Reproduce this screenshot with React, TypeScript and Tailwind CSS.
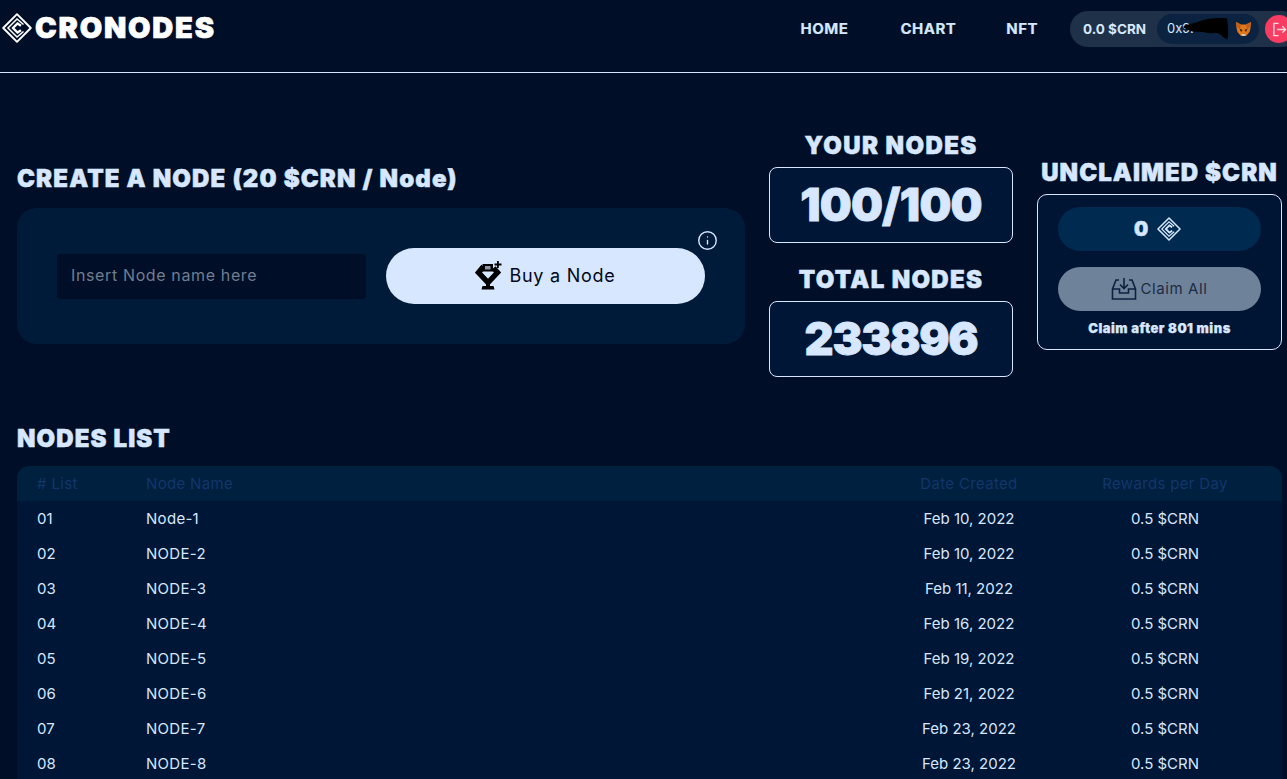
import React from "react";
import { Info } from "lucide-react";

const Logo = ({ size, color = "#fff" }: { size: number; color?: string }) => (
  <svg width={size} height={size} viewBox="0 0 30 30" fill="none" className="shrink-0">
    <path d="M15 1.200 28.800 15 15 28.800 1.200 15Z" stroke={color} strokeWidth="1.900" strokeLinejoin="round" />
    <path d="M21.500 11.500 15 6 6 15 15 24 21.500 18.500" stroke={color} strokeWidth="1.500" />
    <path d="M19 12.800 15.500 10.500 11 15 15.500 19.500 19 17.200" stroke={color} strokeWidth="2.300" />
  </svg>
);

const rows = [
  ["01", "Node-1", "Feb 10, 2022"],
  ["02", "NODE-2", "Feb 10, 2022"],
  ["03", "NODE-3", "Feb 11, 2022"],
  ["04", "NODE-4", "Feb 16, 2022"],
  ["05", "NODE-5", "Feb 19, 2022"],
  ["06", "NODE-6", "Feb 21, 2022"],
  ["07", "NODE-7", "Feb 23, 2022"],
  ["08", "NODE-8", "Feb 23, 2022"],
];

export default function App() {
  return (
    <div className="h-[779px] w-[1287px] overflow-hidden bg-[#000f27] font-['Inter','Liberation_Sans',sans-serif] text-[#d6e7ff]">
      <header className="flex h-[73px] items-start justify-between border-b border-[#d6e7ff] pl-[2px]">
        <div className="flex h-[55px] items-center gap-[3px]">
          <Logo size={30} />
          <span className="text-[29px] leading-none font-black tracking-[1.8px] text-white [-webkit-text-stroke:0.7px_white]">CRONODES</span>
        </div>
        <div className="flex h-[58px] items-center">
          <nav className="flex items-center text-[15px] font-bold tracking-[0.5px] [-webkit-text-stroke:0.2px_#d6e7ff]">
            <a className="mr-[52px]">HOME</a>
            <a className="mr-[50px]">CHART</a>
            <a className="mr-[32px]">NFT</a>
          </nav>
          <div className="mr-[-13px] flex h-[36px] w-[230px] items-center rounded-full bg-[#1e3148] pl-[13px]">
            <span className="w-[74px] shrink-0 text-[13.5px] font-bold">0.0 $CRN</span>
            <div className="relative flex h-[30px] w-[102px] shrink-0 items-center rounded-full bg-[#0b2340] pl-[10px] text-[13px]">
              <span>0x9.</span>
              <svg className="absolute top-[1px] left-[25px]" width="48" height="26" viewBox="0 0 50 26">
                <path d="M1 12C7 8 12 9 18 6 26 3 38 2 47 3 48 11 49 19 47 25 43 24 41 18 34 18 29 20 22 16 16 17 10 17 5 15 1 12Z" fill="#000" />
              </svg>
              <svg className="absolute top-[8px] left-[79px]" width="15" height="14" viewBox="0 0 15 14">
                <path d="M0 0 5 2.500H10L15 0 14.500 6 13.500 10 10 14H5L1.500 10 .5 6Z" fill="#e2761b" />
                <path d="M0 0 5 2.500 4 7 1 5ZM15 0 10 2.500 11 7 14 5Z" fill="#c0621a" />
                <path d="M3.500 6.500 6.500 8 5 10ZM11.500 6.500 8.500 8 10 10Z" fill="#3a2208" />
                <path d="M5.500 12H9.500L9 14H6Z" fill="#d7c1b3" />
              </svg>
            </div>
            <div className="ml-[6px] flex h-[28px] w-[28px] shrink-0 items-center justify-center rounded-full bg-[#f83c62]">
              <svg width="15" height="15" viewBox="0 0 16 16" fill="none" stroke="#ffd9e0" strokeWidth="1.400">
                <path d="M7 1.500H2V14.500H7M5.500 8H14.500M11 4.500 14.500 8 11 11.500" />
              </svg>
            </div>
          </div>
        </div>
      </header>

      <main className="pr-[5px] pl-[17px]">
        <section className="mt-[58px] flex items-center">
          <div className="w-[728px]">
            <h2 className="mb-[14px] text-[24px] leading-[30px] font-black tracking-[1.150px] whitespace-nowrap [-webkit-text-stroke:0.5px_#d6e7ff]">CREATE A NODE (20 $CRN / Node)</h2>
            <div className="relative flex h-[136px] items-center rounded-[20px] bg-[#001a3a] pl-[40px]">
              <input
                placeholder="Insert Node name here"
                className="h-[45px] w-[309px] rounded-[4px] bg-[#000f27] px-[14px] pb-[2px] text-[16px] tracking-[0.63px] outline-none placeholder:text-[#717d90]"
              />
              <button className="ml-[20px] flex h-[56px] w-[319px] items-center justify-center gap-[6px] rounded-full bg-[#d6e7ff] text-[18px] text-[#02071a]">
                <svg width="27" height="29" viewBox="0 0 27 29" className="mb-[2px]">
                  <path d="M8.500 5.500 3.500 11.500 13 21.500 22.500 11.500 18.500 7" fill="none" stroke="#000" strokeWidth="5.400" />
                  <path d="M7.500 3H18V10.500H7.500Z" fill="#000" />
                  <path d="M10 5H15.500V8.500H10Z" fill="#8d96a6" />
                  <path d="M11 20H15V25H18.500L19.500 28.500H6.500L7.500 25H11Z" fill="#000" />
                  <path d="M22 0h1.800v2.600H26.500v1.800H23.800V7H22V4.400H19.500V2.600H22Z" fill="#000" />
                </svg>
                <span className="mb-[2px] ml-[1px] tracking-[0.75px]">Buy a Node</span>
              </button>
              <Info className="absolute top-[22px] left-[680px] text-[#d6e7ff]" size={21} strokeWidth={1.600} />
            </div>
          </div>

          <div className="ml-[24px] w-[244px] text-center">
            <h3 className="mb-[6px] text-[24px] leading-[30px] font-black tracking-[1.400px] whitespace-nowrap [-webkit-text-stroke:0.5px_#d6e7ff]">YOUR NODES</h3>
            <div className="flex h-[76px] items-center justify-center rounded-[8px] border border-[#d6e7ff] bg-[#001636] text-[45px] font-black tracking-[-0.8px] [-webkit-text-stroke:0.8px_#d6e7ff]">100/100</div>
            <h3 className="mt-[22px] mb-[6px] text-[24px] leading-[30px] font-black tracking-[1.300px] whitespace-nowrap [-webkit-text-stroke:0.5px_#d6e7ff]">TOTAL NODES</h3>
            <div className="flex h-[76px] items-center justify-center rounded-[8px] border border-[#d6e7ff] bg-[#001636] text-[45px] font-black tracking-[-1.300px] [-webkit-text-stroke:0.8px_#d6e7ff]">233896</div>
          </div>

          <div className="ml-[24px] w-[245px] text-center">
            <h3 className="mb-[6px] text-[24px] leading-[30px] font-black tracking-[1.070px] whitespace-nowrap [-webkit-text-stroke:0.5px_#d6e7ff]">UNCLAIMED $CRN</h3>
            <div className="flex h-[156px] flex-col items-center rounded-[10px] border border-[#d6e7ff] bg-[#001434] px-[20px] pt-[12px]">
              <div className="flex h-[44px] w-[203px] items-center justify-center gap-[9px] rounded-full bg-[#002a50] pr-[4px] text-[20px] font-black [-webkit-text-stroke:0.5px_#d6e7ff]">
                <span>0</span>
                <Logo size={24} color="#d6e7ff" />
              </div>
              <button className="mt-[16px] flex h-[44px] w-[203px] items-center justify-center gap-[3px] rounded-full bg-[#6e8299] text-[15px] tracking-[0.6px] text-[#1b2d47]">
                <svg width="26" height="24" viewBox="0 0 26 24" fill="none" stroke="#0e2240" strokeWidth="1.600">
                  <path d="M8 3H5L1.500 12V22H24.500V12L21 3H18" />
                  <path d="M1.500 12H8.500V16H17.500V12H24.500" />
                  <path d="M13 1V11M9 7.500 13 11.500 17 7.500" />
                </svg>
                <span>Claim All</span>
              </button>
              <p className="mt-[9px] text-[13px] leading-[16px] font-black tracking-[0.5px] whitespace-nowrap [-webkit-text-stroke:0.25px_#d6e7ff]">Claim after 801 mins</p>
            </div>
          </div>
        </section>

        <h2 className="mt-[47px] text-[24px] leading-[30px] font-black tracking-[1.100px] [-webkit-text-stroke:0.5px_#d6e7ff]">NODES LIST</h2>
        <div className="mt-[12px] overflow-hidden rounded-t-[12px] bg-[#001636] text-[15px]">
          <div className="grid h-[35px] grid-cols-[109px_1fr_196px_196px] items-center bg-[#00203f] pt-[2px] pr-[19px] pl-[20px] tracking-[0.33px] text-[#12366b]">
            <span>#&nbsp;List</span>
            <span>Node Name</span>
            <span className="text-center">Date Created</span>
            <span className="text-center">Rewards per Day</span>
          </div>
          {rows.map(([n, name, date]) => (
            <div key={n} className="grid h-[35px] grid-cols-[109px_1fr_196px_196px] items-center pt-[2px] pr-[19px] pl-[20px]">
              <span>{n}</span>
              <span className="tracking-[0.3px]">{name}</span>
              <span className="text-center">{date}</span>
              <span className="text-center">0.5 $CRN</span>
            </div>
          ))}
        </div>
      </main>
    </div>
  );
}
